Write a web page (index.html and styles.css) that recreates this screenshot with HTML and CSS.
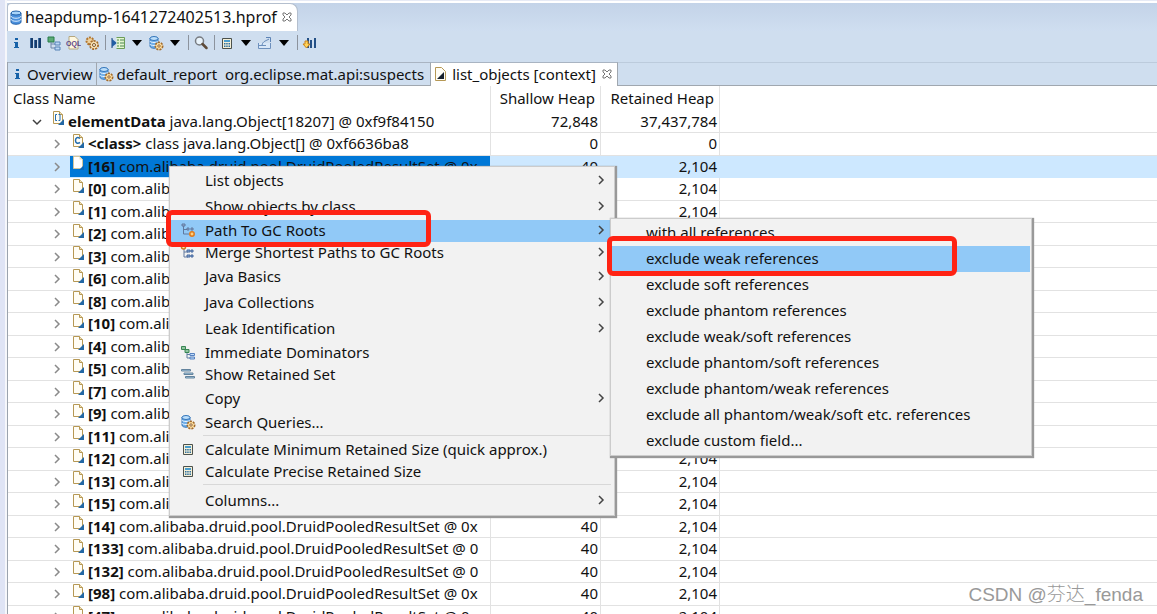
FILE: index.html
```html
<!DOCTYPE html>
<html lang="en">
<head>
<meta charset="utf-8">
<title>heapdump-1641272402513.hprof</title>
<link rel="stylesheet" href="styles.css">
</head>
<body>
<svg class="sprite" aria-hidden="true">
  <symbol id="info" viewBox="0 0 16 16"><path d="M7 3h3v2H7zM6 7h4v5h1v1H6v-1h1V8H6z" fill="#1762a8"/></symbol>
  <symbol id="bars" viewBox="0 0 16 16"><path d="M3 3h3v10H3zM7 5h3v8H7zM11 3h3v10h-3z" fill="#3d6ea3"/><path d="M4 3h2v10H4zM8 5h2v8H8zM12 3h2v10h-2z" fill="#173c6b"/></symbol>
  <symbol id="tree" viewBox="0 0 16 16"><path d="M2 2h6v5H2z" fill="#5dab76" stroke="#287c48"/><path d="M5 7v6h4M5 9h4" fill="none" stroke="#7187a8"/><path d="M9 7h5v3H9zM9 12h5v3H9z" fill="#bdd8f6" stroke="#5782b5"/></symbol>
  <symbol id="oql" viewBox="0 0 16 16"><path d="M4 1.5h6l3 3V14H4z" fill="#fff8df" stroke="#b5a77f"/><text x="1" y="11" class="oql-text">OQL</text></symbol>
  <symbol id="gears" viewBox="0 0 16 16"><circle cx="6" cy="6" r="3.500" fill="#edd09c" stroke="#b1752e" stroke-width="2" stroke-dasharray="2 1"/><circle cx="10" cy="10" r="4" fill="#f7dfb2" stroke="#a56b29" stroke-width="2" stroke-dasharray="2 1"/><circle cx="10" cy="10" r="3.200" fill="#f7dfb2"/><circle cx="10" cy="10" r="1.500" fill="#fff" stroke="#7e5524"/></symbol>
  <symbol id="expand" viewBox="0 0 16 16"><path d="M2 3v10" stroke="#123f79" stroke-width="1"/><path d="M2 4l5 4-5 4z" fill="#225ea4"/><path d="M6.5 2.500h8v11h-8" fill="#e5f6cf" stroke="#6b9c59"/><path d="M7 5h2m1 0h4M7 8h2m1 0h4M7 11h2m1 0h4" stroke="#4a8652"/></symbol>
  <symbol id="database" viewBox="0 0 16 16"><path d="M3 4v9c0 3 10 3 10 0V4" fill="#4a90dd" stroke="#2362aa"/><ellipse cx="8" cy="4" rx="5" ry="2" fill="#a8d4fa" stroke="#2362aa"/><path d="M3 7c0 3 10 3 10 0M3 10c0 3 10 3 10 0" fill="none" stroke="#dceeff"/></symbol>
  <symbol id="dbgear" viewBox="0 0 16 16"><path d="M2 3v8c0 3 8 3 8 0V3" fill="#70afe9" stroke="#3476bb"/><ellipse cx="6" cy="3.500" rx="4" ry="2" fill="#bcdffb" stroke="#3476bb"/><path d="M2 6c0 2 8 2 8 0M2 9c0 2 8 2 8 0" fill="none" stroke="#eaf5ff"/><circle cx="11" cy="11" r="3.500" fill="#ffe1a2" stroke="#a36b2c" stroke-width="2" stroke-dasharray="2 1"/><circle cx="11" cy="11" r="2.700" fill="#ffe1a2"/><circle cx="11" cy="11" r="1.200" fill="#fff" stroke="#93602a"/></symbol>
  <symbol id="search" viewBox="0 0 16 16"><circle cx="6.500" cy="6" r="4" fill="#e9f3fb" stroke="#777b80" stroke-width="1.500"/><path d="M9.500 9l4 4" stroke="#5d4a38" stroke-width="2.500" stroke-linecap="round"/></symbol>
  <symbol id="calc" viewBox="0 0 16 16"><path d="M3.500 3.500h9v10h-9z" fill="#f4efd8" stroke="#4b514c"/><path d="M5 5h6v2H5z" fill="#4a9dcc"/><path d="M5 8h1.500v1.500H5zM7.200 8h1.500v1.500H7.200zM9.500 8H11v1.500H9.500zM5 10.500h1.500V12H5zM7.200 10.500h1.500V12H7.200zM9.500 10.500H11V12H9.500z" fill="#2f719f"/></symbol>
  <symbol id="export" viewBox="0 0 16 16"><path d="M1.500 8v5.500h12V8M1.500 10.500H9" fill="#d8e7f8" stroke="#6d90bd"/><path d="M5 10c1-4 4-4 7-6M9 2.500h4.500V7" fill="none" stroke="#5c83b5"/></symbol>
  <symbol id="bararrow" viewBox="0 0 16 16"><path d="M5 3h2v10H5zM8 5h2v8H8zM12 3h2v10h-2z" fill="#234f85"/><path d="M3 6h3v3h2l-3.500 4L1 9h2z" fill="#ffd45a" stroke="#c9821a"/></symbol>
  <symbol id="close" viewBox="0 0 10 10"><path d="M1 1h2l2 2 2-2h2v2L7 5l2 2v2H7L5 7 3 9H1V7l2-2-2-2z" fill="none" stroke="#777"/></symbol>
  <symbol id="file" viewBox="0 0 13 14"><path d="M1.500.5h6l3 3v9h-9z" fill="#fffdf5" stroke="#b69854"/><path d="M7.500.5v3h3" fill="#efe0b8" stroke="#b69854"/><path d="M12 8v6H6z" fill="#2368a5"/></symbol>
  <symbol id="plainfile" viewBox="0 0 13 14"><path d="M1.500.5h6l3 3v9h-9z" fill="#fff" stroke="#d4c79d"/><path d="M7.500.5v3h3" fill="#efe0b8"/><path d="M12 9v5H7z" fill="#0868bb"/></symbol>
  <symbol id="arrayfile" viewBox="0 0 13 14"><use href="#file"/><path d="M5 3.500H3.500v6H5M6.500 3.500H8v6H6.500" fill="none" stroke="#236cae"/></symbol>
  <symbol id="classfile" viewBox="0 0 13 14"><use href="#file"/><path d="M8 4.500C5 2.500 3.500 4 3.500 6.500S5.500 10 8 8.500" fill="none" stroke="#236cae" stroke-width="1.500"/></symbol>
  <symbol id="listfile" viewBox="0 0 13 14"><path d="M1.500.5h6l4 4v9h-10z" fill="#fffdf5" stroke="#b69854"/><path d="M10 5v7H3z" fill="#17202c"/></symbol>
  <symbol id="right" viewBox="0 0 10 12"><path d="M3 2l4 4-4 4" fill="none" stroke="currentColor" stroke-width="1.500"/></symbol>
  <symbol id="down" viewBox="0 0 10 12"><path d="M1 4l4 4 4-4" fill="none" stroke="#404040" stroke-width="1.500"/></symbol>
  <symbol id="path" viewBox="0 0 16 16"><path d="M3.500 3v9H9M4 7.500h5" fill="none" stroke="#60799e"/><path d="M2 2h3v2H2zM7 6h2v2H7zM11 6h2v2h-2z" fill="#8eaed8" stroke="#60799e"/><circle cx="12" cy="12" r="2.200" fill="#ffd080" stroke="#e27b18" stroke-width="1.500"/></symbol>
  <symbol id="merge" viewBox="0 0 16 16"><path d="M4 5v8h4M4 8h4" fill="none" stroke="#60799e"/><path d="M7 6h3v2H7zM11 6h2v2h-2zM7 11h3v2H7zM11 11h2v2h-2z" fill="#8eaed8" stroke="#46699e"/><circle cx="3.500" cy="3" r="2" fill="#ffe5a9" stroke="#d17b21" stroke-width="1.500"/></symbol>
  <symbol id="dominators" viewBox="0 0 16 16"><path d="M1.500 2.500h4v3h-4zM5 5.500h4v3H5z" fill="#91c49e" stroke="#388654"/><path d="M7 9v5h3M7 10.500h3" fill="none" stroke="#607f9f"/><path d="M10 9.500h4.500v2H10zM10 13h4.500v2H10z" fill="#c1ddfa" stroke="#5782c0"/></symbol>
  <symbol id="retained" viewBox="0 0 16 16"><path d="M1.500 3.500h9v1.500h-9zM4 7h9v1.500H4zM5.500 10.500h9V12h-9z" fill="#a8cce4" stroke="#63839d"/></symbol>
</svg>

<main class="app">
  <nav class="editor-tabs" aria-label="Editors">
    <div class="editor-tab"><svg class="icon"><use href="#database"/></svg><span>heapdump-1641272402513.hprof</span><button class="close" aria-label="Close heap dump"><svg><use href="#close"/></svg></button></div>
  </nav>
  <div class="toolbar" role="toolbar" aria-label="Heap dump tools">
    <button aria-label="Overview"><svg class="icon"><use href="#info"/></svg></button>
    <button aria-label="Histogram"><svg class="icon"><use href="#bars"/></svg></button>
    <button aria-label="Dominator tree"><svg class="icon"><use href="#tree"/></svg></button>
    <button aria-label="Object query"><svg class="icon"><use href="#oql"/></svg></button>
    <button aria-label="Thread overview"><svg class="icon"><use href="#gears"/></svg></button>
    <span class="divider"></span>
    <button aria-label="Run report"><svg class="icon"><use href="#expand"/></svg></button>
    <button class="drop" aria-label="Report choices"></button>
    <button aria-label="Query browser"><svg class="icon"><use href="#dbgear"/></svg></button>
    <button class="drop" aria-label="Query choices"></button>
    <span class="divider"></span>
    <button aria-label="Find"><svg class="icon"><use href="#search"/></svg></button>
    <span class="divider"></span>
    <button aria-label="Calculate size"><svg class="icon"><use href="#calc"/></svg></button>
    <button class="drop" aria-label="Calculation choices"></button>
    <button aria-label="Export"><svg class="icon"><use href="#export"/></svg></button>
    <button class="drop" aria-label="Export choices"></button>
    <span class="divider"></span>
    <button aria-label="Compare"><svg class="icon"><use href="#bararrow"/></svg></button>
  </div>
  <nav class="view-tabs" aria-label="Views">
    <button class="view-tab"><svg class="icon"><use href="#info"/></svg>Overview</button>
    <button class="view-tab report"><svg class="icon"><use href="#dbgear"/></svg>default_report&nbsp; org.eclipse.mat.api:suspects</button>
    <div class="view-tab active"><svg class="file-icon"><use href="#listfile"/></svg><span>list_objects [context]</span><button class="close" aria-label="Close list"><svg><use href="#close"/></svg></button></div>
  </nav>
  <table class="objects">
    <colgroup><col class="name-col"><col class="shallow-col"><col class="retained-col"><col></colgroup>
    <thead><tr><th>Class Name</th><th>Shallow Heap</th><th>Retained Heap</th><th></th></tr></thead>
    <tbody>
      <tr class="root"><td><div class="node"><svg class="chevron"><use href="#down"/></svg><svg class="file-icon"><use href="#arrayfile"/></svg><span class="label"><b>elementData</b> java.lang.Object[18207] @ 0xf9f84150</span></div></td><td>72,848</td><td>37,437,784</td><td></td></tr>
      <tr><td><div class="node"><svg class="chevron"><use href="#right"/></svg><svg class="file-icon"><use href="#classfile"/></svg><span class="label"><b>&lt;class&gt;</b> class java.lang.Object[] @ 0xf6636ba8</span></div></td><td>0</td><td>0</td><td></td></tr>
      <tr class="selected"><td><div class="node"><svg class="chevron"><use href="#right"/></svg><svg class="file-icon"><use href="#plainfile"/></svg><span class="label"><b>[16]</b> com.alibaba.druid.pool.DruidPooledResultSet @ 0x</span></div></td><td>40</td><td>2,104</td><td></td></tr>
      <tr><td><div class="node"><svg class="chevron"><use href="#right"/></svg><svg class="file-icon"><use href="#file"/></svg><span class="label"><b>[0]</b> com.alibaba.druid.pool.DruidPooledResultSet @ 0x</span></div></td><td>40</td><td>2,104</td><td></td></tr>
      <tr><td><div class="node"><svg class="chevron"><use href="#right"/></svg><svg class="file-icon"><use href="#file"/></svg><span class="label"><b>[1]</b> com.alibaba.druid.pool.DruidPooledResultSet @ 0x</span></div></td><td>40</td><td>2,104</td><td></td></tr>
      <tr><td><div class="node"><svg class="chevron"><use href="#right"/></svg><svg class="file-icon"><use href="#file"/></svg><span class="label"><b>[2]</b> com.alibaba.druid.pool.DruidPooledResultSet @ 0x</span></div></td><td>40</td><td>2,104</td><td></td></tr>
      <tr><td><div class="node"><svg class="chevron"><use href="#right"/></svg><svg class="file-icon"><use href="#file"/></svg><span class="label"><b>[3]</b> com.alibaba.druid.pool.DruidPooledResultSet @ 0x</span></div></td><td>40</td><td>2,104</td><td></td></tr>
      <tr><td><div class="node"><svg class="chevron"><use href="#right"/></svg><svg class="file-icon"><use href="#file"/></svg><span class="label"><b>[6]</b> com.alibaba.druid.pool.DruidPooledResultSet @ 0x</span></div></td><td>40</td><td>2,104</td><td></td></tr>
      <tr><td><div class="node"><svg class="chevron"><use href="#right"/></svg><svg class="file-icon"><use href="#file"/></svg><span class="label"><b>[8]</b> com.alibaba.druid.pool.DruidPooledResultSet @ 0x</span></div></td><td>40</td><td>2,104</td><td></td></tr>
      <tr><td><div class="node"><svg class="chevron"><use href="#right"/></svg><svg class="file-icon"><use href="#file"/></svg><span class="label"><b>[10]</b> com.alibaba.druid.pool.DruidPooledResultSet @ 0x</span></div></td><td>40</td><td>2,104</td><td></td></tr>
      <tr><td><div class="node"><svg class="chevron"><use href="#right"/></svg><svg class="file-icon"><use href="#file"/></svg><span class="label"><b>[4]</b> com.alibaba.druid.pool.DruidPooledResultSet @ 0x</span></div></td><td>40</td><td>2,104</td><td></td></tr>
      <tr><td><div class="node"><svg class="chevron"><use href="#right"/></svg><svg class="file-icon"><use href="#file"/></svg><span class="label"><b>[5]</b> com.alibaba.druid.pool.DruidPooledResultSet @ 0x</span></div></td><td>40</td><td>2,104</td><td></td></tr>
      <tr><td><div class="node"><svg class="chevron"><use href="#right"/></svg><svg class="file-icon"><use href="#file"/></svg><span class="label"><b>[7]</b> com.alibaba.druid.pool.DruidPooledResultSet @ 0x</span></div></td><td>40</td><td>2,104</td><td></td></tr>
      <tr><td><div class="node"><svg class="chevron"><use href="#right"/></svg><svg class="file-icon"><use href="#file"/></svg><span class="label"><b>[9]</b> com.alibaba.druid.pool.DruidPooledResultSet @ 0x</span></div></td><td>40</td><td>2,104</td><td></td></tr>
      <tr><td><div class="node"><svg class="chevron"><use href="#right"/></svg><svg class="file-icon"><use href="#file"/></svg><span class="label"><b>[11]</b> com.alibaba.druid.pool.DruidPooledResultSet @ 0x</span></div></td><td>40</td><td>2,104</td><td></td></tr>
      <tr><td><div class="node"><svg class="chevron"><use href="#right"/></svg><svg class="file-icon"><use href="#file"/></svg><span class="label"><b>[12]</b> com.alibaba.druid.pool.DruidPooledResultSet @ 0x</span></div></td><td>40</td><td>2,104</td><td></td></tr>
      <tr><td><div class="node"><svg class="chevron"><use href="#right"/></svg><svg class="file-icon"><use href="#file"/></svg><span class="label"><b>[13]</b> com.alibaba.druid.pool.DruidPooledResultSet @ 0x</span></div></td><td>40</td><td>2,104</td><td></td></tr>
      <tr><td><div class="node"><svg class="chevron"><use href="#right"/></svg><svg class="file-icon"><use href="#file"/></svg><span class="label"><b>[15]</b> com.alibaba.druid.pool.DruidPooledResultSet @ 0x</span></div></td><td>40</td><td>2,104</td><td></td></tr>
      <tr><td><div class="node"><svg class="chevron"><use href="#right"/></svg><svg class="file-icon"><use href="#file"/></svg><span class="label"><b>[14]</b> com.alibaba.druid.pool.DruidPooledResultSet @ 0x</span></div></td><td>40</td><td>2,104</td><td></td></tr>
      <tr><td><div class="node"><svg class="chevron"><use href="#right"/></svg><svg class="file-icon"><use href="#file"/></svg><span class="label"><b>[133]</b> com.alibaba.druid.pool.DruidPooledResultSet @ 0</span></div></td><td>40</td><td>2,104</td><td></td></tr>
      <tr><td><div class="node"><svg class="chevron"><use href="#right"/></svg><svg class="file-icon"><use href="#file"/></svg><span class="label"><b>[132]</b> com.alibaba.druid.pool.DruidPooledResultSet @ 0</span></div></td><td>40</td><td>2,104</td><td></td></tr>
      <tr><td><div class="node"><svg class="chevron"><use href="#right"/></svg><svg class="file-icon"><use href="#file"/></svg><span class="label"><b>[98]</b> com.alibaba.druid.pool.DruidPooledResultSet @ 0x</span></div></td><td>40</td><td>2,104</td><td></td></tr>
      <tr><td><div class="node"><svg class="chevron"><use href="#right"/></svg><svg class="file-icon"><use href="#file"/></svg><span class="label"><b>[47]</b> com.alibaba.druid.pool.DruidPooledResultSet @ 0x</span></div></td><td>40</td><td>2,104</td><td></td></tr>
    </tbody>
  </table>
</main>

<div class="menu context-menu" role="menu">
  <button role="menuitem"><span class="slot"></span><span>List objects</span><svg class="chevron"><use href="#right"/></svg></button>
  <button role="menuitem"><span class="slot"></span><span>Show objects by class</span><svg class="chevron"><use href="#right"/></svg></button>
  <button role="menuitem" class="compact highlighted"><span class="slot"><svg class="icon"><use href="#path"/></svg></span><span>Path To GC Roots</span><svg class="chevron"><use href="#right"/></svg></button>
  <button role="menuitem" class="compact"><span class="slot"><svg class="icon"><use href="#merge"/></svg></span><span>Merge Shortest Paths to GC Roots</span><svg class="chevron"><use href="#right"/></svg></button>
  <button role="menuitem"><span class="slot"></span><span>Java Basics</span><svg class="chevron"><use href="#right"/></svg></button>
  <button role="menuitem"><span class="slot"></span><span>Java Collections</span><svg class="chevron"><use href="#right"/></svg></button>
  <button role="menuitem"><span class="slot"></span><span>Leak Identification</span><svg class="chevron"><use href="#right"/></svg></button>
  <button role="menuitem" class="compact"><span class="slot"><svg class="icon"><use href="#dominators"/></svg></span><span>Immediate Dominators</span></button>
  <button role="menuitem" class="compact"><span class="slot"><svg class="icon"><use href="#retained"/></svg></span><span>Show Retained Set</span></button>
  <button role="menuitem"><span class="slot"></span><span>Copy</span><svg class="chevron"><use href="#right"/></svg></button>
  <button role="menuitem" class="compact"><span class="slot"><svg class="icon"><use href="#dbgear"/></svg></span><span>Search Queries...</span></button>
  <hr>
  <button role="menuitem" class="compact"><span class="slot"><svg class="icon"><use href="#calc"/></svg></span><span>Calculate Minimum Retained Size (quick approx.)</span></button>
  <button role="menuitem" class="compact"><span class="slot"><svg class="icon"><use href="#calc"/></svg></span><span>Calculate Precise Retained Size</span></button>
  <hr>
  <button role="menuitem"><span class="slot"></span><span>Columns...</span><svg class="chevron"><use href="#right"/></svg></button>
</div>
<div class="menu sub-menu" role="menu">
  <button role="menuitem"><span class="slot"></span><span>with all references</span></button>
  <button role="menuitem" class="highlighted"><span class="slot"></span><span>exclude weak references</span></button>
  <button role="menuitem"><span class="slot"></span><span>exclude soft references</span></button>
  <button role="menuitem"><span class="slot"></span><span>exclude phantom references</span></button>
  <button role="menuitem"><span class="slot"></span><span>exclude weak/soft references</span></button>
  <button role="menuitem"><span class="slot"></span><span>exclude phantom/soft references</span></button>
  <button role="menuitem"><span class="slot"></span><span>exclude phantom/weak references</span></button>
  <button role="menuitem"><span class="slot"></span><span>exclude all phantom/weak/soft etc. references</span></button>
  <button role="menuitem"><span class="slot"></span><span>exclude custom field...</span></button>
</div>
<div class="mark mark-path"></div>
<div class="mark mark-weak"></div>
<div class="watermark">CSDN @芬达_fenda</div>
</body>
</html>
```
FILE: styles.css
```css
* { box-sizing: border-box; }

body {
  margin: 0;
  height: 100vh;
  overflow: hidden;
  position: relative;
  background: #fff;
  color: #111;
  font: 15px/22px "Noto Sans", "Open Sans", sans-serif;
}

button {
  margin: 0;
  padding: 0;
  border: 0;
  background: none;
  color: inherit;
  font: inherit;
}

svg { display: block; flex: none; }
.sprite { position: absolute; width: 0; height: 0; }
.icon { width: 16px; height: 16px; }
.file-icon { width: 13px; height: 14px; }
.chevron { width: 10px; height: 12px; color: #8a8a8a; }
.oql-text { font: bold 7px "Liberation Sans", sans-serif; fill: #5c4587; }

.app {
  height: 100%;
  overflow: hidden;
  border-left: 5px solid #dfe4f5;
  padding-left: 2px;
  background: #f6f7fb;
}

/* Editor tabs */
.editor-tabs {
  display: flex;
  height: 31px;
  padding-top: 2px;
  border-top: 1px solid #e6eaf5;
  background: linear-gradient(#fff 2px, #c3d3e8 2px, #cfdef0);
}
.editor-tab {
  display: flex;
  align-items: center;
  gap: 1px;
  padding: 0 5px 1px 0;
  border: 1px solid #b4bfce;
  border-bottom: 0;
  border-radius: 4px 8px 0 0;
  background: #fff;
  font-size: 16px;
}
.close { width: 10px; height: 10px; margin-left: 4px; }
.close svg { width: 10px; height: 10px; }

/* Toolbar */
.toolbar {
  display: flex;
  align-items: center;
  gap: 3px;
  height: 31px;
  padding: 0 1px 8px;
  background: #cfdeef;
}
.toolbar button { width: 16px; height: 16px; }
.drop::after {
  content: "";
  display: block;
  margin: 0 auto;
  width: 0;
  border: 5px solid transparent;
  border-top: 6px solid #000;
  border-bottom: 0;
}
.divider { width: 1px; height: 15px; margin: 0 1px 0 2px; background: #8c939d; }

/* View tabs */
.view-tabs {
  display: flex;
  height: 24px;
  border-left: 1px solid #9aa3ae;
  background: linear-gradient(#bccbdc 1px, #cfdeef 1px);
  box-shadow: inset 0 -1px #a0a7af;
}
.view-tab {
  display: flex;
  align-items: center;
  gap: 2px;
  padding: 0 4px 2px 1px;
  border-top: 1px solid #a9b4c2;
  border-right: 1px solid #a0a7af;
}
.view-tab.report { padding-right: 6px; }
.view-tab.active { gap: 5px; padding: 0 5px 2px 3px; background: #fff; }
.view-tab.active .close { margin-left: 1px; }

/* Object table */
.objects {
  width: 100%;
  table-layout: fixed;
  border-collapse: separate;
  border-spacing: 0;
  border-left: 1px solid #9aa3ae;
  background: #fff;
}
.name-col { width: 483px; }
.shallow-col { width: 110px; }
.retained-col { width: 119px; }
.objects th { height: 25px; padding: 0 5px 2px; font-weight: 400; text-align: left; border-right: 1px solid #e2e2e2; }
.objects th + th { text-align: right; }
.objects td {
  height: 22px;
  padding: 0 2px 2px 0;
  line-height: 18px;
  text-align: right;
  white-space: nowrap;
  border-right: 1px solid #e2e2e2;
  border-bottom: 1px solid #e2e2e2;
}
.objects tr > :last-child { border-right: 0; }
.objects tbody tr:nth-child(even) td { height: 23px; }
.objects td:first-child { padding: 0; overflow: hidden; }
.node { display: flex; height: 21px; padding-left: 44px; align-items: center; }
.root .node { padding-left: 24px; }
.node .file-icon { margin-left: 10px; align-self: flex-start; }
.label { padding: 0 0 2px 3px; }
.selected td { background: #cde8ff; border-color: #cde8ff; }
.selected td:first-child { background: linear-gradient(90deg, #cde8ff 62px, #0078d7 62px); }

/* Menus */
.menu {
  position: absolute;
  padding: 1px;
  border: 1px solid #ccc;
  background: #f2f2f2;
  box-shadow: 1px 1px 1px 1px #999;
}
.menu button { display: flex; align-items: center; width: 100%; height: 26px; padding: 0 7px 2px 0; text-align: left; white-space: nowrap; }
.menu .compact { height: 22px; }
.menu .highlighted { background: #91c9f7; }
.menu .chevron { margin-left: auto; color: #444; }
.menu hr { height: 1px; margin: 1px 2px 3px 32px; border: 0; background: #d8d8d8; }
.slot { width: 34px; padding-left: 9px; flex: none; }
.context-menu { left: 169px; top: 166px; width: 446px; }
.sub-menu { left: 610px; top: 218px; width: 422px; }

/* Annotations */
.mark { position: absolute; border: 5px solid #ff2314; border-radius: 6px; }
.mark-path { left: 166px; top: 210px; width: 265px; height: 37px; }
.mark-weak { left: 607px; top: 236px; width: 350px; height: 40px; }
.watermark {
  position: absolute;
  right: 14px;
  bottom: 4px;
  color: #999;
  font: 300 19px/30px "Liberation Sans", "Noto Sans CJK SC", sans-serif;
}
```
